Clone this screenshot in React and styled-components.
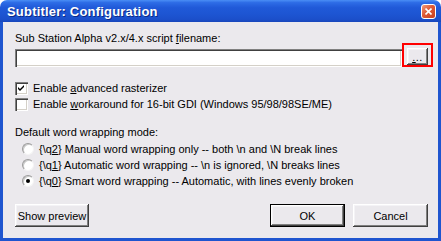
import React from 'react';
import styled, { createGlobalStyle } from 'styled-components';

const GlobalStyle = createGlobalStyle`
  html, body {
    margin: 0;
    padding: 0;
    background: #fff;
  }
  body {
    font-family: "Liberation Sans", Arial, sans-serif;
    font-size: 11px;
    color: #000;
  }
`;

const Win = styled.div`
  width: 441px;
  height: 241px;
  display: flex;
  flex-direction: column;
  box-sizing: border-box;
`;

const TitleBar = styled.div`
  height: 22px;
  flex: none;
  display: flex;
  align-items: center;
  justify-content: space-between;
  padding: 0 5px 0 7px;
  border-radius: 7px 7px 0 0;
  background: linear-gradient(
    to bottom,
    #4a8ef5 0%,
    #2d6ce6 12%,
    #2059d8 35%,
    #1d55d2 65%,
    #1b4fca 88%,
    #1846bb 100%
  );
`;

const Title = styled.span`
  color: #fff;
  font-family: "Liberation Sans", Arial, sans-serif;
  font-weight: bold;
  font-size: 13px;
  letter-spacing: 0.2px;
  text-shadow: 1px 1px 0 #0b2a86;
`;

const CloseBtn = styled.div`
  width: 13px;
  height: 13px;
  border: 1px solid #fff;
  border-radius: 3px;
  display: flex;
  align-items: center;
  justify-content: center;
  background: linear-gradient(135deg, #f09a7a 0%, #df5a36 45%, #c8401f 100%);
`;

const Client = styled.div`
  flex: 1;
  display: flex;
  flex-direction: column;
  background: #ebe9ed;
  border: 3px solid #1f55cf;
  border-top: none;
  padding: 10px 5px 11px 12px;
`;

const Label = styled.div`
  line-height: 13px;
  white-space: nowrap;
`;

const PathRow = styled.div`
  display: flex;
  align-items: flex-end;
  margin-top: -2px;
`;

const TextBox = styled.div`
  flex: 1;
  height: 18px;
  box-sizing: border-box;
  background: #fff;
  box-shadow: inset 1px 1px #808080, inset 2px 2px #404040,
    inset -1px -1px #fff, inset -2px -2px #d4d0c8;
`;

const RedFrame = styled.div`
  width: 31px;
  height: 24px;
  box-sizing: border-box;
  border: 2px solid #f00;
  padding: 3px 0 0 3px;
`;

const Button = styled.button`
  box-sizing: border-box;
  width: ${p => p.$w}px;
  height: ${p => p.$h || 23}px;
  padding: 0;
  margin: 0;
  border: ${p => (p.$default ? '1px solid #000' : 'none')};
  background: #ebe9ed;
  font-family: "Liberation Sans", Arial, sans-serif;
  font-size: 11px;
  color: #000;
  box-shadow: inset -1px -1px #404040, inset 1px 1px #fff,
    inset -2px -2px #808080, inset 2px 2px #f4f3f6;
`;

const Dots = styled.span`
  display: block;
  line-height: 11px;
  padding-top: 2px;
  letter-spacing: 0.5px;
`;

const CheckRow = styled.div`
  display: flex;
  align-items: center;
  gap: 5px;
  height: 16px;
  margin-top: ${p => p.$mt || 0}px;
  white-space: nowrap;
`;

const CheckBox = styled.div`
  width: 13px;
  height: 13px;
  box-sizing: border-box;
  flex: none;
  background: #fff;
  display: flex;
  align-items: center;
  justify-content: center;
  box-shadow: inset 1px 1px #808080, inset 2px 2px #404040,
    inset -1px -1px #fff, inset -2px -2px #d4d0c8;
`;

const SectionLabel = styled(Label)`
  margin-top: 14px;
`;

const RadioList = styled.div`
  margin-top: 2px;
  padding-left: 7px;
  display: flex;
  flex-direction: column;
`;

const Radio = styled.div`
  width: 12px;
  height: 12px;
  box-sizing: border-box;
  flex: none;
  border-radius: 50%;
  background: #fff;
  border: 1px solid;
  border-color: #9a9a9a #f4f4f4 #f4f4f4 #9a9a9a;
  box-shadow: inset 1px 1px #c9c9c9;
  display: flex;
  align-items: center;
  justify-content: center;
`;

const RadioDot = styled.div`
  width: 4px;
  height: 4px;
  border-radius: 50%;
  background: #000;
`;

const ButtonRow = styled.div`
  margin-top: auto;
  padding-right: 5px;
  display: flex;
  gap: 8px;
`;

const Spacer = styled.div`
  flex: 1;
`;

const Check = () => (
  <svg width="7" height="7" viewBox="0 0 7 7">
    <path d="M0 2 L2 4 L6 0 L6 2 L2 6 L0 4 Z" fill="#000" />
  </svg>
);

const CloseX = () => (
  <svg width="7" height="7" viewBox="0 0 7 7">
    <path d="M0.5 0.5 L6.5 6.5 M6.5 0.5 L0.5 6.5" stroke="#fff" strokeWidth="1.6" />
  </svg>
);

const radios = [
  { code: '2', text: ' Manual word wrapping only -- both \\n and \\N break lines', on: false },
  { code: '1', text: ' Automatic word wrapping -- \\n is ignored, \\N breaks lines', on: false },
  { code: '0', text: ' Smart word wrapping -- Automatic, with lines evenly broken', on: true },
];

export default function App() {
  return (
    <>
      <GlobalStyle />
      <Win>
        <TitleBar>
          <Title>Subtitler: Configuration</Title>
          <CloseBtn><CloseX /></CloseBtn>
        </TitleBar>
        <Client>
          <Label>Sub Station Alpha v2.x/4.x script <u>f</u>ilename:</Label>
          <PathRow>
            <TextBox />
            <RedFrame>
              <Button $w={21} $h={17}><Dots><u>.</u>..</Dots></Button>
            </RedFrame>
          </PathRow>
          <CheckRow $mt={13}>
            <CheckBox><Check /></CheckBox>
            <span>Enable <u>a</u>dvanced rasterizer</span>
          </CheckRow>
          <CheckRow>
            <CheckBox />
            <span>Enable <u>w</u>orkaround for 16-bit GDI (Windows 95/98/98SE/ME)</span>
          </CheckRow>
          <SectionLabel>Default word wrapping mode:</SectionLabel>
          <RadioList>
            {radios.map(r => (
              <CheckRow key={r.code}>
                <Radio>{r.on && <RadioDot />}</Radio>
                <span>{'{\\q'}<u>{r.code}</u>{'}'}{r.text}</span>
              </CheckRow>
            ))}
          </RadioList>
          <ButtonRow>
            <Button $w={74}>Show preview</Button>
            <Spacer />
            <Button $w={75} $default>OK</Button>
            <Button $w={75}>Cancel</Button>
          </ButtonRow>
        </Client>
      </Win>
    </>
  );
}
